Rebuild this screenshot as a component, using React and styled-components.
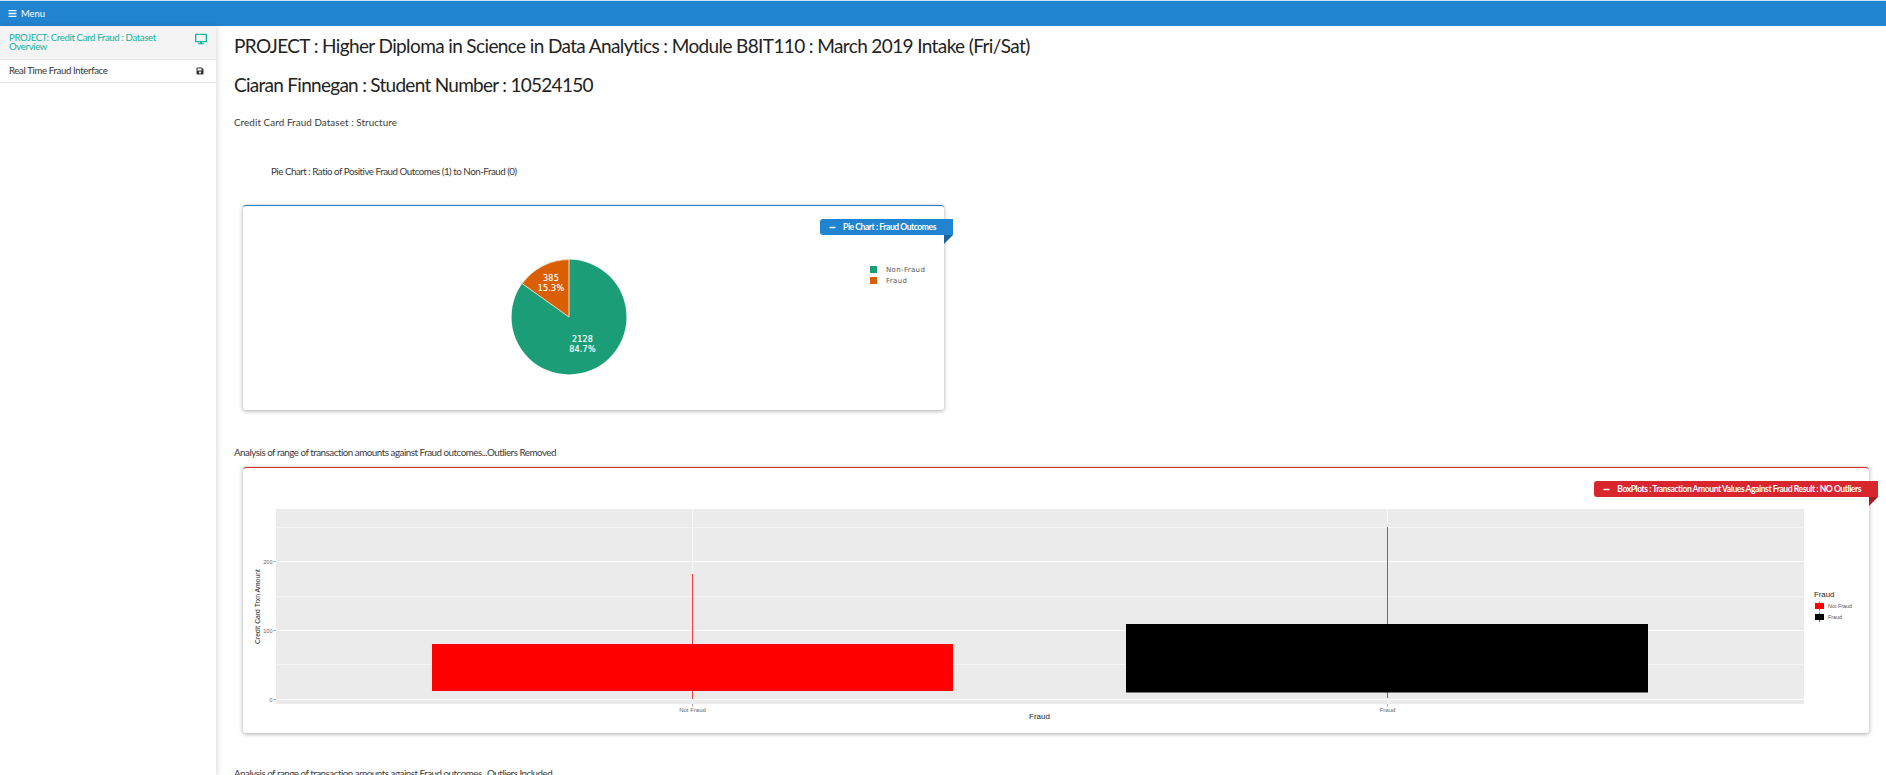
import styled, { createGlobalStyle } from "styled-components";
import { FaBars, FaDesktop, FaSave, FaMinus } from "react-icons/fa";

const GlobalStyle = createGlobalStyle`
    html, body {
        margin: 0;
        height: 100%;
        overflow: hidden;
        background: #fff;
    }
    body {
        font-family: "Lato", "Liberation Sans", sans-serif;
        color: #222;
    }
`

const Page = styled.div`
    height: 775px;
    display: flex;
    flex-direction: column;
    overflow: hidden;
`

const TopBar = styled.header`
    box-sizing: border-box;
    flex: 0 0 26px;
    display: flex;
    align-items: center;
    gap: 4px;
    padding-left: 8px;
    background: #2184d0;
    border-top: 1px solid #cfe3f3;
    color: #fff;
    font-size: 9.4px;
`

const Body = styled.div`
    flex: 1;
    display: flex;
    min-height: 0;
`

const Sidebar = styled.nav`
    flex: 0 0 216px;
    background: #fff;
    box-shadow: 2px 0 5px rgba(0, 0, 0, 0.12);
`

const SideItem = styled.a`
    box-sizing: border-box;
    height: ${props => props.height}px;
    display: flex;
    justify-content: space-between;
    padding: ${props => props.top}px 9px 0 9px;
    background: ${props => (props.active ? "#f4f4f4" : "#fff")};
    border-bottom: 1px solid #e4e4e4;
    color: ${props => (props.active ? "#12b5a0" : "#333")};
    font-size: 9.6px;
    letter-spacing: -0.35px;
    line-height: 8.5px;

    span {
        width: 170px;
    }

    svg {
        flex: none;
        margin-right: ${props => (props.active ? "0" : "3px")};
        margin-top: ${props => (props.active ? "-1px" : "0")};
    }
`

const Main = styled.main`
    flex: 1;
    padding: 8px 0 0 18px;
    min-width: 0;
`

const Title = styled.h2`
    margin: ${props => props.top || 0}px 0 0 0;
    font-size: 19px;
    line-height: 24px;
    font-weight: 400;
    letter-spacing: ${props => props.spacing}px;
    color: #222;
`

const Caption = styled.p`
    margin: ${props => props.top}px 0 0 ${props => props.left || 0}px;
    font-size: 9.8px;
    letter-spacing: ${props => props.spacing}px;
    line-height: 14px;
    color: #3a3a3a;
`

const ChartBox = styled.section`
    position: relative;
    box-sizing: border-box;
    width: ${props => props.width}px;
    height: ${props => props.height}px;
    margin: ${props => props.top}px 0 0 9px;
    background: #fff;
    border-top: 1px solid ${props => props.color};
    border-radius: 3px;
    box-shadow: 0 1px 4px rgba(0, 0, 0, 0.35);

    svg.chart {
        display: block;
    }
`

const Ribbon = styled.div`
    position: absolute;
    top: 13px;
    right: -9px;
    height: 16px;
    display: flex;
    align-items: center;
    gap: 7px;
    padding: 0 17px 0 9px;
    background: ${props => props.color};
    border-radius: 3px 0 0 3px;
    color: #fff;
    font-size: 8.6px;
    font-weight: 700;
    letter-spacing: -0.47px;
    white-space: nowrap;

    &::after {
        content: "";
        position: absolute;
        top: 100%;
        right: 0;
        border-top: 9px solid ${props => props.dark};
        border-right: 9px solid transparent;
    }
`

const PieChart = () => (
    <svg className="chart" width="701" height="204" viewBox="243 206 701 204">
        <circle cx="569" cy="317" r="57.5" fill="#1b9e77" />
        <path d="M569 317 L569 259.5 A57.5 57.5 0 0 0 522.2 283.6 Z" fill="#d95f02" stroke="#f3e3c8" strokeWidth="1" />
        <g fontFamily="DejaVu Sans, sans-serif" fontSize="8" letterSpacing="0.2" fill="#fff" stroke="#fff" strokeWidth="0.15" textAnchor="middle">
            <text x="551" y="280.5">385</text>
            <text x="551" y="290.5">15.3%</text>
            <text x="582.5" y="341.5">2128</text>
            <text x="582.5" y="351.5">84.7%</text>
        </g>
        <rect x="870" y="266" width="7" height="7" fill="#1b9e77" />
        <rect x="870" y="277" width="7" height="7" fill="#d95f02" />
        <g fontFamily="DejaVu Sans, sans-serif" fontSize="7" letterSpacing="0.35" fill="#555">
            <text x="886" y="272">Non-Fraud</text>
            <text x="886" y="283">Fraud</text>
        </g>
    </svg>
);

const majorLines = [{ y: 561.5, label: "200" }, { y: 630.5, label: "100" }, { y: 699.5, label: "0" }];
const minorLines = [527.5, 596.5, 664.5];

const boxes = [
    { name: "Not Fraud", x: 692.5, left: 432, right: 953, top: 644, bottom: 691, whisker: 574, end: 699, fill: "#ff0000", line: "#ee3a3a" },
    { name: "Fraud", x: 1387.5, left: 1126, right: 1648, top: 624, bottom: 692.5, whisker: 527, end: 698, fill: "#000", line: "#6e6e6e" },
];

const BoxPlot = () => (
    <svg className="chart" width="1626" height="265" viewBox="243 468 1626 265">
        <rect x="276" y="509" width="1528" height="195" fill="#ebebeb" />
        {minorLines.map(y => (
            <line key={y} x1="276" x2="1804" y1={y} y2={y} stroke="#f5f5f5" strokeWidth="1" />
        ))}
        {majorLines.map(row => (
            <line key={row.y} x1="276" x2="1804" y1={row.y} y2={row.y} stroke="#fff" strokeWidth="1" />
        ))}
        {majorLines.map(row => (
            <g key={row.label}>
                <line x1="273.5" x2="276" y1={row.y} y2={row.y} stroke="#888" strokeWidth="0.7" />
                <text x="272.5" y={row.y + 2} fontFamily="Liberation Sans, sans-serif" fontSize="5.5" fill="#666" textAnchor="end">{row.label}</text>
            </g>
        ))}
        {boxes.map(box => (
            <g key={box.name}>
                <line x1={box.x} x2={box.x} y1="509" y2="704" stroke="#f7f7f7" strokeWidth="1" />
                <line x1={box.x} x2={box.x} y1={box.whisker} y2={box.end} stroke={box.line} strokeWidth="1" />
                <rect x={box.left} y={box.top} width={box.right - box.left} height={box.bottom - box.top} fill={box.fill} />
                <line x1={box.x} x2={box.x} y1="704" y2="706.5" stroke="#888" strokeWidth="0.7" />
                <text x={box.x} y="711.5" fontFamily="Liberation Sans, sans-serif" fontSize="6" fill="#666" textAnchor="middle">{box.name}</text>
            </g>
        ))}
        <text x="1039.5" y="718.5" fontFamily="Liberation Sans, sans-serif" fontSize="8" fill="#222" textAnchor="middle">Fraud</text>
        <text transform="translate(260 606.5) rotate(-90)" fontFamily="Liberation Sans, sans-serif" fontSize="6.8" fill="#222" textAnchor="middle">Credit Card Trxn Amount</text>

        <text x="1814" y="597" fontFamily="Liberation Sans, sans-serif" fontSize="7.8" fill="#222">Fraud</text>
        <line x1="1819.5" x2="1819.5" y1="601.5" y2="611" stroke="#f04a4a" strokeWidth="0.8" />
        <rect x="1815" y="603" width="9" height="6" fill="#ff0000" />
        <line x1="1819.5" x2="1819.5" y1="612.5" y2="622" stroke="#444" strokeWidth="0.8" />
        <rect x="1815" y="614" width="9" height="6" fill="#000" />
        <g fontFamily="Liberation Sans, sans-serif" fontSize="5.4" fill="#555">
            <text x="1828" y="608">Not Fraud</text>
            <text x="1828" y="619">Fraud</text>
        </g>
    </svg>
);

const App = () => {
    return (
        <Page>
            <GlobalStyle />
            <TopBar>
                <FaBars size={9} />
                <span>Menu</span>
            </TopBar>
            <Body>
                <Sidebar>
                    <SideItem active height={34} top={8}>
                        <span>PROJECT: Credit Card Fraud : Dataset Overview</span>
                        <FaDesktop size={12} />
                    </SideItem>
                    <SideItem height={23} top={7}>
                        <span>Real Time Fraud Interface</span>
                        <FaSave size={8} />
                    </SideItem>
                </Sidebar>
                <Main>
                    <Title spacing={-0.62}>PROJECT : Higher Diploma in Science in Data Analytics : Module B8IT110 : March 2019 Intake (Fri/Sat)</Title>
                    <Title top={15} spacing={-0.72}>Ciaran Finnegan : Student Number : 10524150</Title>
                    <Caption top={18} spacing={0.1}>Credit Card Fraud Dataset : Structure</Caption>
                    <Caption top={35} left={37} spacing={-0.5}>Pie Chart : Ratio of Positive Fraud Outcomes (1) to Non-Fraud (0)</Caption>
                    <ChartBox width={701} height={205} top={27} color="#1f7ec8">
                        <Ribbon color="#2184d0" dark="#1a639c">
                            <FaMinus size={7} />
                            <span>Pie Chart : Fraud Outcomes</span>
                        </Ribbon>
                        <PieChart />
                    </ChartBox>
                    <Caption top={35} spacing={-0.49}>Analysis of range of transaction amounts against Fraud outcomes...Outliers Removed</Caption>
                    <ChartBox width={1626} height={266} top={8} color="#d9262e">
                        <Ribbon color="#d9262e" dark="#a31c22">
                            <FaMinus size={7} />
                            <span>BoxPlots : Transaction Amount Values Against Fraud Result : NO Outliers</span>
                        </Ribbon>
                        <BoxPlot />
                    </ChartBox>
                    <Caption top={33} spacing={-0.49}>Analysis of range of transaction amounts against Fraud outcomes...Outliers Included</Caption>
                </Main>
            </Body>
        </Page>
    )
}

export default App;
